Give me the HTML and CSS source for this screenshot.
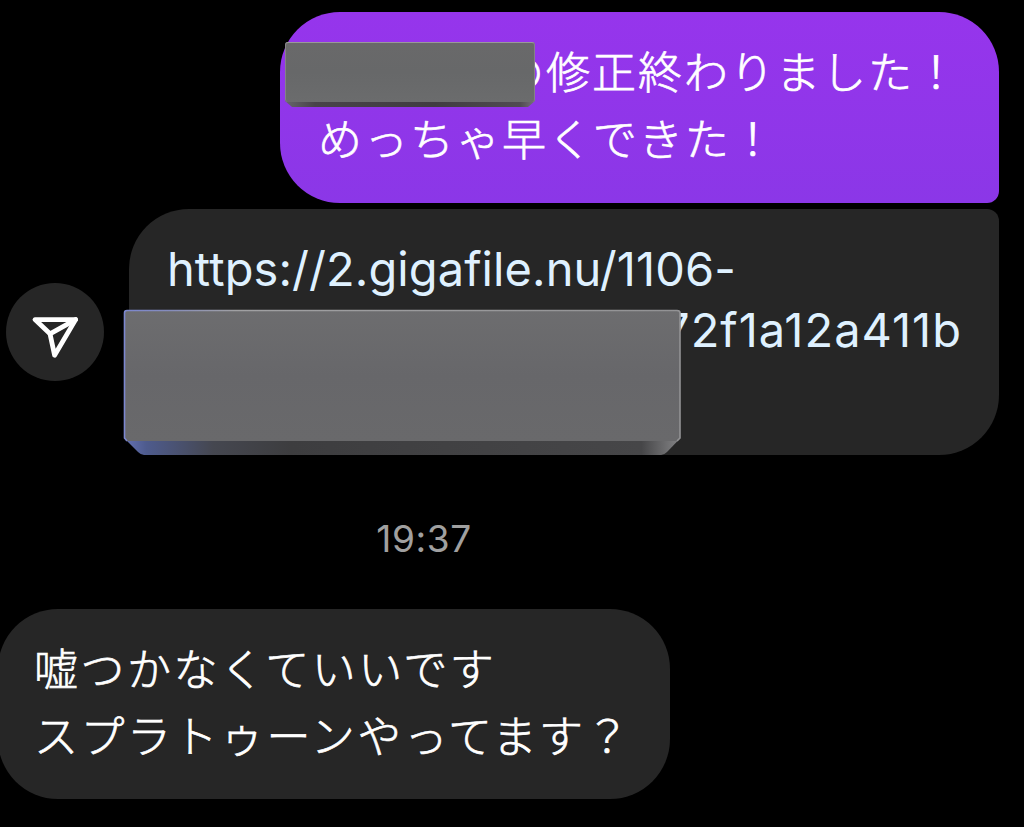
FILE: index.html
```
<!DOCTYPE html>
<html lang="ja">
<head>
    <meta charset="UTF-8">
    <meta name="viewport" content="width=device-width, initial-scale=1.0">
    <title>Chat</title>
    <link rel="stylesheet" href="styles.css">
</head>
<body>
    <main class="chat">
        <div class="bubble sent">
            <p class="line after-cover"><span>の修正終わりました！</span></p>
            <p class="line"><span>めっちゃ早くできた！</span></p>
            <div class="cover cover-small"></div>
        </div>

        <div class="link-row">
            <button class="share" aria-label="送信">
                <svg width="98" height="98" viewBox="0 0 98 98" fill="none" stroke="#fff" stroke-width="4.8" stroke-linejoin="round" stroke-linecap="round">
                    <path d="M29 36.6H69.6L48.6 72.3L44 50.8Z"/>
                    <path d="M44 50.8L69.6 36.6"/>
                </svg>
            </button>
            <div class="bubble link">
                <p class="url"><span class="url-start">https://2.gigafile.nu/1106-</span></p>
                <p class="url url-end"><span class="url-tail">72f1a12a411b</span></p>
                <svg class="cover-large" width="558" height="147" viewBox="0 0 558 147">
                    <defs>
                        <linearGradient id="face" x1="0" y1="0" x2="0" y2="1">
                            <stop offset="0" stop-color="#6d6d6f"/>
                            <stop offset="0.5" stop-color="#67676a"/>
                            <stop offset="1" stop-color="#69696b"/>
                        </linearGradient>
                        <linearGradient id="base" x1="0" y1="0" x2="1" y2="0">
                            <stop offset="0" stop-color="#6572b4"/>
                            <stop offset="0.04" stop-color="#4e5b8d"/>
                            <stop offset="0.16" stop-color="#454750"/>
                            <stop offset="0.3" stop-color="#3d3d3f"/>
                            <stop offset="0.93" stop-color="#464648"/>
                            <stop offset="1" stop-color="#858587"/>
                        </linearGradient>
                        <linearGradient id="edge" x1="0" y1="0" x2="1" y2="0">
                            <stop offset="0" stop-color="#7c87cf"/>
                            <stop offset="0.08" stop-color="#858cbd"/>
                            <stop offset="0.2" stop-color="#a0a0a2"/>
                            <stop offset="1" stop-color="#929294"/>
                        </linearGradient>
                    </defs>
                    <path d="M1 129L15 143Q18 146 21 146H538Q541 146 544 143L557.5 129Z" fill="url(#base)"/>
                    <path d="M4 1H554Q557 1 557 4V129L554 132H4L1 129V4Q1 1 4 1Z" fill="url(#face)"/>
                    <path d="M4 132L1.5 129V4Q1.5 1.5 4 1.5H554Q557 1.5 557 4V129L554 132" fill="none" stroke="url(#edge)" stroke-width="1.6"/>
                </svg>
            </div>
        </div>

        <time class="time">19:37</time>

        <div class="bubble received">
            <p class="line"><span>嘘つかなくていいです</span></p>
            <p class="line"><span>スプラトゥーンやってます？</span></p>
        </div>
    </main>
</body>
</html>
```
FILE: styles.css
```
* {
    box-sizing: border-box;
}

body {
    margin: 0;
    background-color: #000;
    color: #fff;
    font-family: "Noto Sans CJK JP", sans-serif;
    font-weight: 300;
}

p {
    margin: 0;
}

.chat {
    width: 1024px;
    height: 827px;
    padding-top: 12px;
    display: flex;
    flex-direction: column;
    align-items: flex-start;
    overflow: hidden;
}

.bubble {
    position: relative;
    background-color: #262626;
    border-radius: 60px;
}

.line {
    height: 67px;
    font-size: 44px;
    line-height: 67px;
    letter-spacing: 2px;
    white-space: nowrap;
    -webkit-text-stroke: 0.7px currentColor;
}

.sent {
    width: 719px;
    height: 191px;
    margin-left: 280px;
    padding: 25px 0 0 38px;
    background: linear-gradient(#9635ec, #8b37e7);
    border-bottom-right-radius: 12px;
}

.after-cover {
    padding-left: 182px;
}

.cover {
    position: absolute;
    left: 5px;
    top: 30px;
    width: 250px;
    height: 65px;
    background: linear-gradient(90deg, #66666b, #484349 12%, #403c41 60%, #504b52 94%, #77707b);
    clip-path: polygon(0 0, 100% 0, 100% 59px, 243px 100%, 7px 100%, 0 59px);
    border-radius: 3px;
}

.cover::before {
    content: "";
    display: block;
    height: 59px;
    background: linear-gradient(#69696a, #676869 50%, #6b6c6d);
    border: 1px solid #858286;
    border-top-color: #999;
    border-bottom: 0;
    border-radius: 3px;
}

.link-row {
    display: flex;
    align-items: center;
    gap: 25px;
    margin: 6px 0 0 6px;
}

.share {
    width: 98px;
    height: 98px;
    padding: 0;
    border: 0;
    border-radius: 50%;
    background-color: #262626;
}

.share svg {
    display: block;
}

.link {
    width: 870px;
    height: 246px;
    padding: 29px 37px 0 38px;
    border-top-right-radius: 12px;
}

.url {
    color: #dff1ff;
    font-family: Inter, sans-serif;
    font-size: 47px;
    font-weight: 400;
    line-height: 61px;
    letter-spacing: 0.08px;
    white-space: nowrap;
}

.url-end {
    text-align: right;
    letter-spacing: 1px;
}

.cover-large {
    position: absolute;
    left: -6px;
    top: 100px;
}

.time {
    width: 848px;
    margin-top: 61px;
    color: #a0a0a0;
    font-family: Inter, sans-serif;
    font-size: 37px;
    font-weight: 400;
    line-height: 46px;
    letter-spacing: 0.6px;
    text-align: center;
}

.received {
    width: 672px;
    height: 190px;
    margin: 47px 0 0 -2px;
    padding: 25px 0 0 36px;
}

.received .line {
    letter-spacing: 2.5px;
}
```
